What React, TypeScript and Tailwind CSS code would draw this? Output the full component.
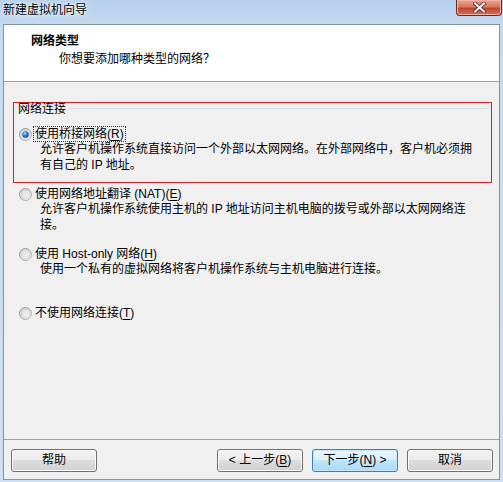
import React from "react";

const font = "font-['Liberation_Sans','Noto_Sans_CJK_SC',sans-serif]";

const Radio = ({ id, checked }: { id: string; checked?: boolean }) => (
  <svg width="13" height="13" viewBox="0 0 13 13" className="shrink-0">
    <defs>
      <linearGradient id={`${id}-ring`} x1="0" y1="0" x2="1" y2="1">
        <stop offset="0" stopColor="#8a8a8a" />
        <stop offset="1" stopColor="#b5b5b5" />
      </linearGradient>
      <linearGradient id={`${id}-fill`} x1="0" y1="0" x2="1" y2="1">
        <stop offset="0" stopColor="#d9d9d9" />
        <stop offset="1" stopColor="#f7f7f7" />
      </linearGradient>
      <radialGradient id={`${id}-dot`} cx="0.4" cy="0.35" r="0.7">
        <stop offset="0" stopColor="#aee0ff" />
        <stop offset="0.45" stopColor="#2f8ad6" />
        <stop offset="1" stopColor="#0d3f7c" />
      </radialGradient>
    </defs>
    <circle cx="6.5" cy="6.5" r="6" fill={`url(#${id}-fill)`} stroke={`url(#${id}-ring)`} strokeWidth="1" />
    <circle cx="6.5" cy="6.5" r="4.3" fill="none" stroke="#c9c9c9" strokeWidth="0.8" />
    {checked && <circle cx="6.5" cy="6.5" r="3.2" fill={`url(#${id}-dot)`} />}
  </svg>
);

const Key = ({ k }: { k: string }) => <span className="underline underline-offset-[2px]">{k}</span>;

const Button = ({ children, primary }: { children: React.ReactNode; primary?: boolean }) => (
  <button
    className={`w-[86px] h-[23px] rounded-[3px] border text-[12px] leading-[21px] text-black ${
      primary
        ? "border-[#3c7fb1] bg-[linear-gradient(#eaf6fd_0%,#d9f0fc_50%,#bee6fd_50%,#a7d9f5_100%)] shadow-[inset_0_0_0_1px_#c8e8fa]"
        : "border-[#707070] bg-[linear-gradient(#f2f2f2_0%,#ebebeb_50%,#dddddd_50%,#cfcfcf_100%)] shadow-[inset_0_0_0_1px_#fcfcfc]"
    }`}
  >
    {children}
  </button>
);

const Row = ({ id, checked, children, focus }: { id: string; checked?: boolean; children: React.ReactNode; focus?: boolean }) => (
  <div className="flex items-center h-[14px]">
    <Radio id={id} checked={checked} />
    <span className={`ml-[2px] px-px leading-[14px] ${focus ? "outline outline-1 outline-dotted outline-[#333]" : ""}`}>
      {children}
    </span>
  </div>
);

export default function App() {
  return (
    <div className={`${font} w-[503px] h-[482px] flex flex-col px-[3px] pb-[2px] bg-[linear-gradient(180deg,#b6cfea_0%,#c5dbf1_6%,#cddff2_100%)] text-[12px] text-black`}>
      {/* title bar */}
      <div className="h-[24px] flex items-start justify-between">
        <span className="mt-[2px] leading-[16px] text-[12px] [text-shadow:0_0_6px_#ffffff,0_0_3px_#ffffff]">新建虚拟机向导</span>
        <div className="-mr-[2px] w-[46px] h-[16px] rounded-b-[4px] border border-t-0 border-[#6b2a22] bg-[linear-gradient(#eaa38f_0%,#d9765f_45%,#c2452e_55%,#d3725a_100%)] shadow-[inset_0_0_0_1px_#f0b3a3] flex items-center justify-center">
          <svg width="13" height="11" viewBox="0 0 13 11">
            <path d="M2 1.5 L11 9.5 M11 1.5 L2 9.5" stroke="#4a1f1a" strokeWidth="3.6" strokeLinecap="square" />
            <path d="M2 1.5 L11 9.5 M11 1.5 L2 9.5" stroke="#ffffff" strokeWidth="2" strokeLinecap="square" />
          </svg>
        </div>
      </div>

      {/* content */}
      <div className="flex-1 flex flex-col border border-[#84929f] bg-[#f0f0f0]">
        <div className="h-[57px] bg-white border-b border-[#a0a0a0] pl-[27px] pt-[8px]">
          <div className="font-bold leading-[16px]">网络类型</div>
          <div className="mt-[2px] ml-[28px] leading-[16px]">你想要添加哪种类型的网络？</div>
        </div>

        <div className="flex-1 flex flex-col pl-[9px] pr-[7px]">
          <div className="mt-[20px] border border-[#d21f2a] pl-[5px] pr-[2px] pb-[9px]">
            <div className="flex items-center h-[12px] -ml-px">
              <span className="leading-[12px] pr-[3px]">网络连接</span>
              <div className="flex-1 h-px bg-[#d5dfe5] mt-[-1px]" />
            </div>
            <div className="mt-[12px]">
              <Row id="r1" checked focus>
                使用桥接网络(<Key k="R" />)
              </Row>
              <div className="pl-[21px] leading-[16px]">
                允许客户机操作系统直接访问一个外部以太网网络。在外部网络中，客户机必须拥
                <br />
                有自己的 IP 地址。
              </div>
            </div>
          </div>

          <div className="pl-[6px]">
            <div className="mt-[4px]">
              <Row id="r2">
                使用网络地址翻译 (NAT)(<Key k="E" />)
              </Row>
              <div className="pl-[21px] leading-[16px]">
                允许客户机操作系统使用主机的 IP 地址访问主机电脑的拨号或外部以太网网络连
                <br />
                接。
              </div>
            </div>
            <div className="mt-[14px]">
              <Row id="r3">
                使用 Host-only 网络(<Key k="H" />)
              </Row>
              <div className="pl-[21px] leading-[16px]">使用一个私有的虚拟网络将客户机操作系统与主机电脑进行连接。</div>
            </div>
            <div className="mt-[29px]">
              <Row id="r4">
                不使用网络连接(<Key k="T" />)
              </Row>
            </div>
          </div>

          <div className="flex-1" />
        </div>

        <div className="h-px bg-[#a0a0a0]" />
        <div className="flex items-center pt-[9px] pb-[7px] pl-[7px] pr-[6px]">
          <Button>帮助</Button>
          <div className="flex-1" />
          <div className="flex gap-[9px]">
            <Button>
              &lt; 上一步(<Key k="B" />)
            </Button>
            <Button primary>
              下一步(<Key k="N" />) &gt;
            </Button>
            <Button>取消</Button>
          </div>
        </div>
      </div>
    </div>
  );
}
